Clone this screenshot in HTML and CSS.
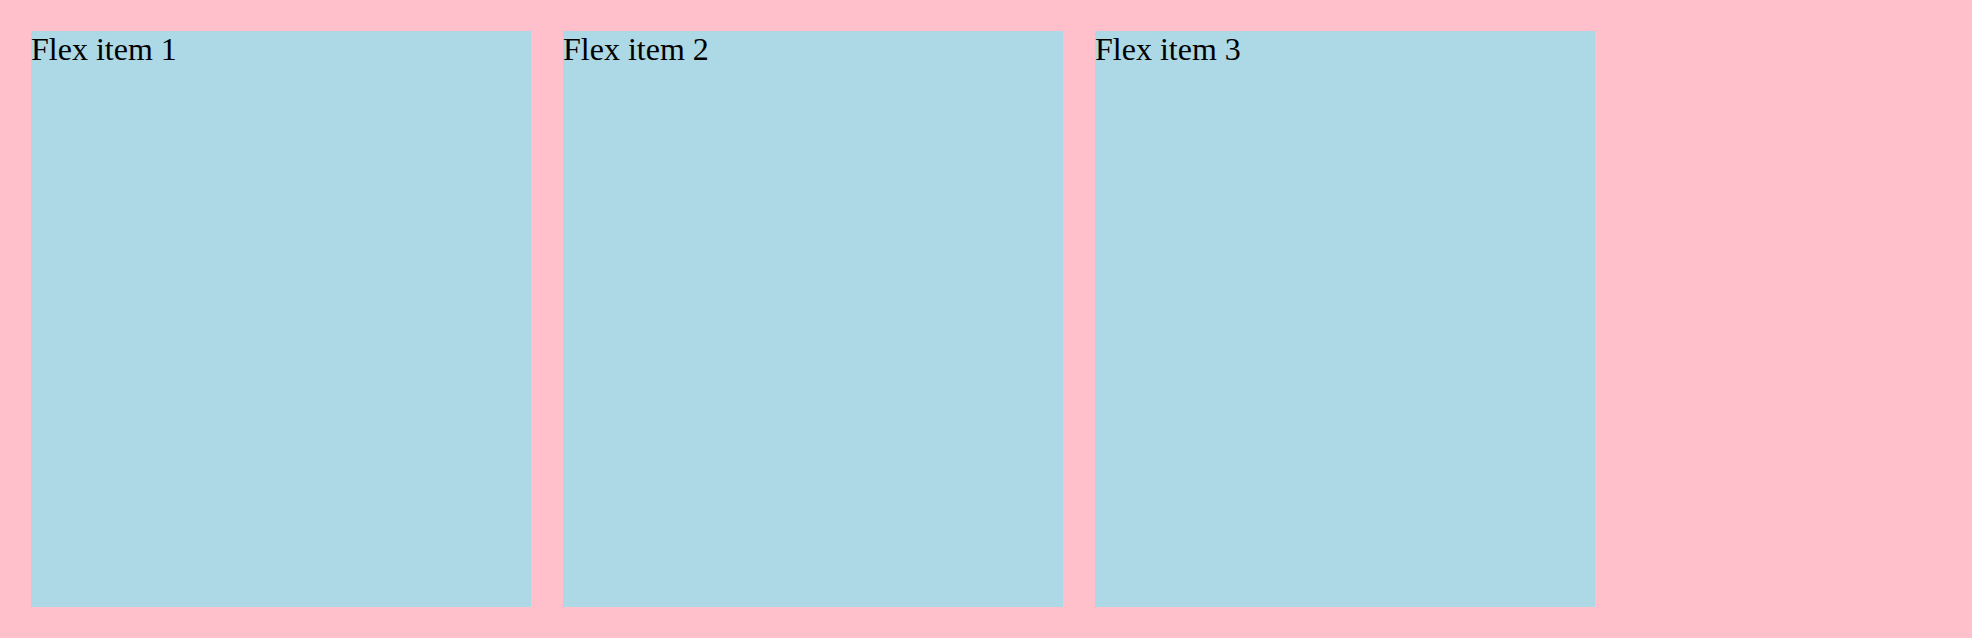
FILE: index.html
```html
<!DOCTYPE html>
<html>
<head>
<meta charset="utf-8">
<link rel="stylesheet" href="styles.css">
</head>
<body>
<div class="flex-container">
  <div class="flex-item">Flex item 1</div>
  <div class="flex-item">Flex item 2</div>
  <div class="flex-item">Flex item 3</div>
</div>
</body>
</html>
```
FILE: styles.css
```css
html, body {
  margin: 0;
  height: 100%;
}

body {
  background: pink;
  font-family: "Liberation Serif", "Times New Roman", serif;
}

.flex-container {
  display: flex;
  box-sizing: border-box;
  height: 100%;
  padding: 15px;
}

.flex-item {
  width: 500px;
  margin: 16px;
  background: lightblue;
  font-size: 32px;
}
```
